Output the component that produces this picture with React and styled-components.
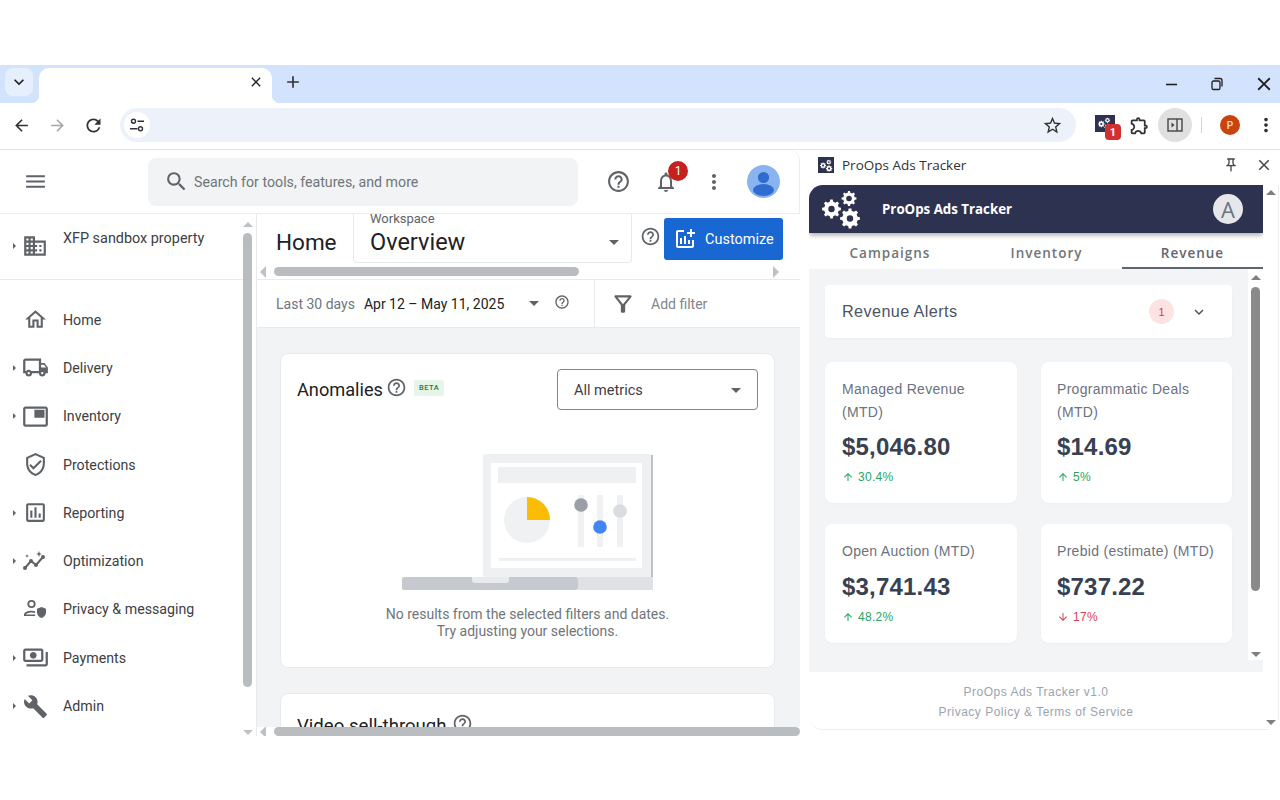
import React from "react";
import styled, { createGlobalStyle } from "styled-components";
import {
  MdAdd,
  MdAddchart,
  MdArrowBack,
  MdArrowDownward,
  MdArrowForward,
  MdArrowUpward,
  MdBuild,
  MdClose,
  MdHelpOutline,
  MdKeyboardArrowDown,
  MdMenu,
  MdMoreVert,
  MdOutlineAssessment,
  MdOutlineDomain,
  MdOutlineExtension,
  MdOutlineFeaturedVideo,
  MdOutlineFilterAlt,
  MdOutlineHome,
  MdOutlineLocalShipping,
  MdOutlineNotifications,
  MdOutlinePayments,
  MdOutlinePushPin,
  MdOutlineVerifiedUser,
  MdRefresh,
  MdRemove,
  MdSearch,
  MdStarBorder,
} from "react-icons/md";

const GlobalStyle = createGlobalStyle`
  html, body {
    margin: 0;
    background: #fff;
    font-family: Roboto, "Liberation Sans", sans-serif;
  }
  * { box-sizing: border-box; }
`;

const MirrorIcon = styled.span`
  display: flex;
  transform: scaleX(-1);
`;

// one gear with a hole, teeth built from the angle of each tooth
const gearPath = (cx, cy, r, hole, teeth = 8) => {
  const points = [];
  const step = (Math.PI * 2) / teeth;
  for (let i = 0; i < teeth; i++) {
    const a = i * step;
    const corners = [
      [a - step * 0.3, r * 0.78],
      [a - step * 0.17, r],
      [a + step * 0.17, r],
      [a + step * 0.3, r * 0.78],
    ];
    corners.forEach(([t, d]) => {
      points.push(`${(cx + Math.cos(t) * d).toFixed(2)} ${(cy + Math.sin(t) * d).toFixed(2)}`);
    });
  }
  const ring = `M${points.join("L")}Z`;
  const inner = `M${cx - hole} ${cy}a${hole} ${hole} 0 1 0 ${hole * 2} 0a${hole} ${hole} 0 1 0 ${-hole * 2} 0Z`;
  return ring + inner;
};

const GearsIcon = ({ size }) => (
  <svg width={size} height={size} viewBox="0 0 40 40">
    <path fillRule="evenodd" fill="#fff" d={gearPath(9.5, 20, 9.5, 3.2)} />
    <path fillRule="evenodd" fill="#fff" d={gearPath(27, 9.5, 7.5, 2.8)} />
    <path fillRule="evenodd" fill="#fff" d={gearPath(28, 29.5, 10, 3.2)} />
  </svg>
);

const OptimizationIcon = () => (
  <svg width="26" height="24" viewBox="0 0 26 24" fill="none">
    <path d="M3 19l6-7 5 4 7-8" stroke="#5f6368" strokeWidth="2" />
    <circle cx="3" cy="19" r="2" fill="#5f6368" />
    <circle cx="9" cy="12" r="2" fill="#5f6368" />
    <circle cx="14" cy="16" r="2" fill="#5f6368" />
    <circle cx="21" cy="8" r="2" fill="#5f6368" />
    <path d="M17 2l.8 2.2L20 5l-2.2.8L17 8l-.8-2.2L14 5l2.2-.8z" fill="#5f6368" />
    <path d="M5 5l.5 1.5L7 7l-1.5.5L5 9l-.5-1.5L3 7l1.5-.5z" fill="#5f6368" />
  </svg>
);

const PrivacyIcon = () => (
  <svg width="26" height="24" viewBox="0 0 26 24" fill="none">
    <circle cx="9.5" cy="7" r="3.2" stroke="#5f6368" strokeWidth="1.8" />
    <path d="M2 19v-1.4c0-2.6 4-3.9 7.5-3.9 1.2 0 2.5.2 3.6.5v1.8c-1.1-.4-2.4-.6-3.6-.6-2.8 0-5.6 1-5.6 2.2h9.2V19z" fill="#5f6368" />
    <path d="M19.5 10l4.5 1.7v3.5c0 2.7-1.9 5-4.5 5.8-2.6-.8-4.5-3.1-4.5-5.8v-3.5z" fill="#5f6368" />
  </svg>
);

const navItems = [
  { label: "Home", icon: <MdOutlineHome size={25} /> },
  { label: "Delivery", icon: <MdOutlineLocalShipping size={27} />, expand: true },
  { label: "Inventory", icon: <MirrorIcon><MdOutlineFeaturedVideo size={27} /></MirrorIcon>, expand: true },
  { label: "Protections", icon: <MdOutlineVerifiedUser size={25} /> },
  { label: "Reporting", icon: <MdOutlineAssessment size={25} />, expand: true },
  { label: "Optimization", icon: <OptimizationIcon />, expand: true },
  { label: "Privacy & messaging", icon: <PrivacyIcon /> },
  { label: "Payments", icon: <MdOutlinePayments size={27} />, expand: true },
  { label: "Admin", icon: <MdBuild size={25} />, expand: true },
];

const stats = [
  { label: "Managed Revenue (MTD)", value: "$5,046.80", change: "30.4%", up: true },
  { label: "Programmatic Deals (MTD)", value: "$14.69", change: "5%", up: true },
  { label: "Open Auction (MTD)", value: "$3,741.43", change: "48.2%", up: true },
  { label: "Prebid (estimate) (MTD)", value: "$737.22", change: "17%", up: false },
];

const RestoreIcon = () => (
  <svg width="14" height="14" viewBox="0 0 14 14" fill="none" stroke="#1f1f1f" strokeWidth="1.3">
    <rect x="2" y="4" width="8" height="8.5" rx="1.6" />
    <path d="M4.5 1.5h5.5a2 2 0 0 1 2 2v6" />
  </svg>
);

const Illustration = () => (
  <IllustrationSvg width="252" height="137" viewBox="0 0 252 137">
    <rect x="0" y="123" width="176" height="13" rx="2" fill="#c6cad0" />
    <rect x="176" y="123" width="75" height="13" rx="1" fill="#dfe1e5" />
    <rect x="81" y="0" width="170" height="123" rx="2" fill="#eff0f2" />
    <rect x="249" y="1" width="2" height="122" fill="#bdc1c6" />
    <rect x="89" y="9" width="151" height="105" fill="#fff" />
    <rect x="96" y="13" width="138" height="16" fill="#eff0f2" />
    <circle cx="125" cy="66" r="23" fill="#f0f1f2" />
    <path d="M125 66V43a23 23 0 0 1 23 23z" fill="#fbbc04" />
    <rect x="176" y="41" width="6" height="52" fill="#f0f1f2" />
    <rect x="195" y="41" width="6" height="52" fill="#f0f1f2" />
    <rect x="215" y="41" width="6" height="52" fill="#f0f1f2" />
    <circle cx="179" cy="51" r="6.8" fill="#9aa0a6" />
    <circle cx="198" cy="73" r="6.8" fill="#4285f4" />
    <circle cx="218" cy="57" r="6.8" fill="#dadce0" />
    <rect x="97" y="104" width="137" height="3" fill="#eff0f2" />
    <path d="M70 123h37v3a3 3 0 0 1-3 3H73a3 3 0 0 1-3-3z" fill="#e8eaed" />
  </IllustrationSvg>
);

const App = () => (
  <>
    <GlobalStyle />
    <Window>
      <TabStrip>
        <TabSearch><MdKeyboardArrowDown size={20} /></TabSearch>
        <Tab><MdClose size={16} /></Tab>
        <NewTab><MdAdd size={20} /></NewTab>
        <WindowControls>
          <MdRemove size={19} />
          <RestoreIcon />
          <MdClose size={22} />
        </WindowControls>
      </TabStrip>

      <Toolbar>
        <NavButton><MdArrowBack size={19} /></NavButton>
        <NavButton $muted><MdArrowForward size={19} /></NavButton>
        <NavButton><MdRefresh size={21} /></NavButton>
        <Omnibox>
          <SiteInfo>
            <svg width="16" height="16" viewBox="0 0 16 16" fill="none" stroke="#303134" strokeWidth="1.4">
              <circle cx="4.5" cy="4.2" r="2" />
              <path d="M8.5 4.2H15M1 11.8h7.5" />
              <circle cx="11.5" cy="11.8" r="2" />
            </svg>
          </SiteInfo>
          <MdStarBorder size={21} color="#303134" />
        </Omnibox>
        <ExtensionButton>
          <GearsIcon size={14} />
          <ExtensionBadge>1</ExtensionBadge>
        </ExtensionButton>
        <PuzzleButton><MdOutlineExtension size={21} /></PuzzleButton>
        <SidePanelButton>
          <svg width="16" height="14" viewBox="0 0 16 14" fill="none">
            <rect x="1" y="1" width="14" height="12" stroke="#444746" strokeWidth="1.4" />
            <path d="M10 1v12" stroke="#444746" strokeWidth="1.4" />
            <path d="M4.5 4.5L7.5 7l-3 2.5z" fill="#444746" />
          </svg>
        </SidePanelButton>
        <ToolbarDivider />
        <ProfileChip>P</ProfileChip>
        <MoreButton><MdMoreVert size={22} /></MoreButton>
      </Toolbar>

      <Workarea>
        <AdManager>
          <AppHeader>
            <MenuButton><MdMenu size={25} /></MenuButton>
            <SearchBox>
              <MdSearch size={25} color="#5f6368" />
              <span>Search for tools, features, and more</span>
            </SearchBox>
            <HeaderActions>
              <HeaderIcon><MdHelpOutline size={25} /></HeaderIcon>
              <HeaderIcon>
                <MdOutlineNotifications size={24} />
                <BellBadge>1</BellBadge>
              </HeaderIcon>
              <HeaderIcon><MdMoreVert size={24} /></HeaderIcon>
              <Avatar>
                <svg width="33" height="33" viewBox="0 0 33 33">
                  <circle cx="16.5" cy="12.5" r="5.6" fill="#2e6ccf" />
                  <ellipse cx="16.5" cy="25" rx="10.5" ry="6" fill="#2e6ccf" />
                </svg>
              </Avatar>
            </HeaderActions>
          </AppHeader>

          <AppBody>
            <Sidebar>
              <SideNav>
                <PropertyRow>
                  <ExpandSlot>
                    <Caret $dir="right" $size={3} $color="#5f6368" />
                  </ExpandSlot>
                  <NavIcon><MdOutlineDomain size={26} /></NavIcon>
                  <PropertyName>XFP sandbox property</PropertyName>
                </PropertyRow>
                <NavList>
                  {navItems.map((item) => (
                    <NavRow key={item.label}>
                      <ExpandSlot>
                        {item.expand && <Caret $dir="right" $size={3} $color="#5f6368" />}
                      </ExpandSlot>
                      <NavIcon>{item.icon}</NavIcon>
                      <NavLabel>{item.label}</NavLabel>
                    </NavRow>
                  ))}
                </NavList>
              </SideNav>
              <VScroll $width={13} $pad="8px 4px 1px 0">
                <Caret $dir="up" $size={5} $color="#bdc1c6" />
                <VThumb $width={9} $length={454} $gap={6} $color="#b9bdc0" />
                <Caret $dir="down" $size={5} $color="#bdc1c6" />
              </VScroll>
            </Sidebar>

            <Main>
              <TitleBlock>
                <TitleRow>
                  <PageTitle>Home</PageTitle>
                  <WorkspaceSelect>
                    <WorkspaceLabel>Workspace</WorkspaceLabel>
                    <WorkspaceValue>
                      Overview
                      <Caret $dir="down" $size={5} $color="#5f6368" />
                    </WorkspaceValue>
                  </WorkspaceSelect>
                  <TitleHelp><MdHelpOutline size={21} /></TitleHelp>
                  <CustomizeButton>
                    <MdAddchart size={24} />
                    Customize
                  </CustomizeButton>
                </TitleRow>
                <HScroll>
                  <Caret $dir="left" $size={6} $color="#bdc1c6" />
                  <HThumb $width={305} />
                  <HEndCaret><Caret $dir="right" $size={6} $color="#bdc1c6" /></HEndCaret>
                </HScroll>
              </TitleBlock>

              <FilterRow>
                <DateGroup>
                  <DateHint>Last 30 days</DateHint>
                  <DateValue>Apr 12 – May 11, 2025</DateValue>
                  <Caret $dir="down" $size={5} $color="#5f6368" />
                  <DateHelp><MdHelpOutline size={16} /></DateHelp>
                </DateGroup>
                <AddFilter>
                  <MdOutlineFilterAlt size={26} color="#5f6368" />
                  <span>Add filter</span>
                </AddFilter>
              </FilterRow>

              <Dashboard>
                <Card>
                  <CardHead>
                    <CardTitle>Anomalies</CardTitle>
                    <TitleHelpIcon><MdHelpOutline size={21} /></TitleHelpIcon>
                    <BetaTag>BETA</BetaTag>
                    <MetricSelect>
                      All metrics
                      <Caret $dir="down" $size={5} $color="#5f6368" />
                    </MetricSelect>
                  </CardHead>
                  <Illustration />
                  <EmptyText>
                    No results from the selected filters and dates.
                    <br />
                    Try adjusting your selections.
                  </EmptyText>
                </Card>
                <Card>
                  <VideoHead>
                    <VideoTitle>Video sell-through</VideoTitle>
                    <TitleHelpIcon><MdHelpOutline size={21} /></TitleHelpIcon>
                  </VideoHead>
                </Card>
              </Dashboard>

              <BottomScroll>
                <Caret $dir="left" $size={6} $color="#bdc1c6" />
                <HThumb $width={526} />
              </BottomScroll>
            </Main>
          </AppBody>
        </AdManager>

        <SidePanel>
          <PanelTitleBar>
            <PanelLogo><GearsIcon size={13} /></PanelLogo>
            <PanelName>ProOps Ads Tracker</PanelName>
            <MdOutlinePushPin size={16} color="#444746" />
            <PanelClose><MdClose size={18} /></PanelClose>
          </PanelTitleBar>

          <ExtensionFrame>
            <ExtensionApp>
              <BrandBar>
                <GearsIcon size={40} />
                <BrandName>ProOps Ads Tracker</BrandName>
                <UserCircle>A</UserCircle>
              </BrandBar>
              <TabRow>
                <SectionTab $width={162}>Campaigns</SectionTab>
                <SectionTab $width={151}>Inventory</SectionTab>
                <SectionTab $width={141} $active>Revenue</SectionTab>
              </TabRow>
              <ScrollArea>
                <ScrollContent>
                  <AlertCard>
                    <AlertTitle>Revenue Alerts</AlertTitle>
                    <AlertCount>1</AlertCount>
                    <MdKeyboardArrowDown size={18} color="#4b5563" />
                  </AlertCard>
                  <StatGrid>
                    {stats.map((stat) => (
                      <StatCard key={stat.label}>
                        <StatLabel>{stat.label}</StatLabel>
                        <StatValue>{stat.value}</StatValue>
                        <StatChange $up={stat.up}>
                          {stat.up ? <MdArrowUpward size={12} /> : <MdArrowDownward size={12} />}
                          {stat.change}
                        </StatChange>
                      </StatCard>
                    ))}
                  </StatGrid>
                </ScrollContent>
                <VScroll $width={15} $pad="6px 0 3px">
                  <Caret $dir="up" $size={5} $color="#7f7f7f" />
                  <VThumb $width={9} $length={304} $gap={7} $color="#8a8a8a" />
                  <Caret $dir="down" $size={5} $color="#7f7f7f" />
                </VScroll>
              </ScrollArea>
              <ScrollFoot />
              <PanelFooter>
                <span>ProOps Ads Tracker v1.0</span>
                <span>Privacy Policy &amp; Terms of Service</span>
              </PanelFooter>
            </ExtensionApp>
            <VScroll $width={15} $pad="5px 0 4px">
              <Caret $dir="up" $size={5} $color="#7f7f7f" />
              <Caret $dir="down" $size={5} $color="#7f7f7f" />
            </VScroll>
          </ExtensionFrame>
        </SidePanel>
      </Workarea>
    </Window>
  </>
);

export default App;

const Window = styled.div`
  width: 1280px;
  height: 800px;
  padding: 65px 0 64px;
  display: flex;
  flex-direction: column;
  overflow: hidden;
  background: #fff;
`;

const TabStrip = styled.div`
  height: 38px;
  flex: none;
  display: flex;
  align-items: flex-end;
  padding-left: 5px;
  background: #d3e3fd;
`;

const TabSearch = styled.div`
  width: 28px;
  height: 28px;
  margin-bottom: 7px;
  border-radius: 8px;
  display: flex;
  align-items: center;
  justify-content: center;
  background: #e6effd;
  color: #1f1f1f;
`;

const Tab = styled.div`
  position: relative;
  width: 233px;
  height: 35px;
  margin-left: 6px;
  padding: 0 8px 7px 0;
  display: flex;
  align-items: center;
  justify-content: flex-end;
  border-radius: 10px 10px 0 0;
  background: #fff;
  color: #1f1f1f;

  &::before,
  &::after {
    content: "";
    position: absolute;
    bottom: 0;
    width: 8px;
    height: 8px;
  }

  &::before {
    left: -8px;
    background: radial-gradient(circle at 0 0, #d3e3fd 8px, #fff 8.5px);
  }

  &::after {
    right: -8px;
    background: radial-gradient(circle at 100% 0, #d3e3fd 8px, #fff 8.5px);
  }
`;

const NewTab = styled.div`
  width: 20px;
  height: 20px;
  margin: 0 0 11px 11px;
  display: flex;
  color: #333;
`;

const WindowControls = styled.div`
  margin-left: auto;
  width: 118px;
  height: 38px;
  padding-right: 5px;
  display: flex;
  align-items: center;
  justify-content: space-between;
  color: #1f1f1f;
`;

const Toolbar = styled.div`
  height: 47px;
  flex: none;
  display: flex;
  align-items: center;
  padding: 0 0 2px 3px;
  border-bottom: 1px solid #e3e5e8;
  background: #fff;
`;

const NavButton = styled.div`
  width: 36px;
  flex: none;
  display: flex;
  justify-content: center;
  color: ${(props) => (props.$muted ? "#a4a6a8" : "#303134")};
`;

const Omnibox = styled.div`
  width: 956px;
  height: 34px;
  flex: none;
  margin-left: 9px;
  padding: 0 13px 0 4px;
  display: flex;
  align-items: center;
  justify-content: space-between;
  border-radius: 17px;
  background: #edf2fa;
`;

const SiteInfo = styled.div`
  width: 26px;
  height: 26px;
  display: flex;
  align-items: center;
  justify-content: center;
  border-radius: 50%;
  background: #fff;
`;

const ExtensionButton = styled.div`
  position: relative;
  width: 20px;
  height: 17px;
  flex: none;
  margin: -3px 0 0 19px;
  display: flex;
  align-items: center;
  justify-content: center;
  background: #2e3251;
`;

const ExtensionBadge = styled.span`
  position: absolute;
  left: 10px;
  top: 9px;
  width: 16px;
  height: 16px;
  display: flex;
  align-items: center;
  justify-content: center;
  border-radius: 4px;
  background: #d32f2f;
  color: #fff;
  font-size: 11px;
  font-weight: 700;
`;

const PuzzleButton = styled.div`
  width: 21px;
  flex: none;
  margin-left: 14px;
  display: flex;
  color: #303134;
`;

const SidePanelButton = styled.div`
  width: 34px;
  height: 34px;
  flex: none;
  margin-left: 8px;
  display: flex;
  align-items: center;
  justify-content: center;
  border-radius: 50%;
  background: #e0e0e0;
`;

const ToolbarDivider = styled.div`
  width: 1px;
  height: 16px;
  flex: none;
  margin-left: 9px;
  background: #c9d8f0;
`;

const ProfileChip = styled.div`
  width: 20px;
  height: 20px;
  flex: none;
  margin-left: 18px;
  display: flex;
  align-items: center;
  justify-content: center;
  border-radius: 50%;
  background: #c8430f;
  color: #f8d9c8;
  font-size: 10px;
  font-weight: 500;
`;

const MoreButton = styled.div`
  margin-left: 15px;
  flex: none;
  display: flex;
  color: #303134;
`;

const Workarea = styled.div`
  flex: 1;
  min-height: 0;
  display: flex;
`;

const AdManager = styled.div`
  width: 800px;
  flex: none;
  display: flex;
  flex-direction: column;
  overflow: hidden;
  background: #fff;
`;

const AppHeader = styled.header`
  height: 64px;
  flex: none;
  display: flex;
  align-items: center;
  border-bottom: 1px solid #eceef0;
  border-right: 1px solid #eceef0;
  border-top-right-radius: 10px;
`;

const MenuButton = styled.div`
  width: 148px;
  padding-left: 23px;
  display: flex;
  color: #5f6368;
`;

const SearchBox = styled.div`
  width: 430px;
  height: 48px;
  padding-left: 16px;
  display: flex;
  align-items: center;
  gap: 5px;
  border-radius: 8px;
  background: #f1f3f4;
  color: #70757a;
  font-size: 14.2px;
`;

const HeaderActions = styled.div`
  margin-left: 16px;
  display: flex;
  align-items: center;
`;

const HeaderIcon = styled.div`
  position: relative;
  width: 48px;
  display: flex;
  justify-content: center;
  color: #5f6368;
`;

const BellBadge = styled.span`
  position: absolute;
  left: 26px;
  top: -9px;
  width: 20px;
  height: 20px;
  display: flex;
  align-items: center;
  justify-content: center;
  border-radius: 50%;
  background: #c5221f;
  color: #fff;
  font-size: 12px;
`;

const Avatar = styled.div`
  width: 33px;
  height: 33px;
  margin-left: 9px;
  display: flex;
  overflow: hidden;
  border-radius: 50%;
  background: #8ab4f0;
`;

const AppBody = styled.div`
  flex: 1;
  min-height: 0;
  display: flex;
`;

const Sidebar = styled.aside`
  width: 257px;
  flex: none;
  display: flex;
  border-right: 1px solid #e8eaed;
`;

const SideNav = styled.nav`
  flex: 1;
  min-width: 0;
`;

const PropertyRow = styled.div`
  height: 66px;
  padding-top: 19px;
  display: flex;
  align-items: flex-start;
  border-bottom: 1px solid #e8eaed;
`;

const PropertyName = styled.div`
  margin: -3px 0 0 13px;
  color: #3c4043;
  font-size: 14.4px;
  line-height: 18px;
`;

const NavList = styled.div`
  padding-top: 15.5px;
`;

const NavRow = styled.div`
  height: 48.3px;
  display: flex;
  align-items: center;
`;

const ExpandSlot = styled.div`
  width: 20px;
  min-height: 26px;
  padding-left: 13px;
  display: flex;
  align-items: center;
`;

const NavIcon = styled.div`
  width: 30px;
  display: flex;
  justify-content: center;
  color: #5f6368;
`;

const NavLabel = styled.div`
  margin-left: 13px;
  color: #3c4043;
  font-size: 14.2px;
`;

const VScroll = styled.div`
  width: ${(props) => props.$width}px;
  flex: none;
  padding: ${(props) => props.$pad};
  display: flex;
  flex-direction: column;
  align-items: center;
  justify-content: space-between;
  background: #fff;
`;

const VThumb = styled.div`
  width: ${(props) => props.$width}px;
  height: ${(props) => props.$length}px;
  margin: ${(props) => props.$gap}px 0 auto;
  border-radius: 5px;
  background: ${(props) => props.$color};
`;

const Caret = styled.span`
  display: block;
  flex: none;
  width: 0;
  height: 0;
  border-style: solid;
  border-color: transparent;
  border-width: ${(props) => props.$size}px;
  ${(props) =>
    props.$dir === "down" &&
    `border-top: ${props.$size}px solid ${props.$color}; border-bottom-width: 0;`}
  ${(props) =>
    props.$dir === "up" &&
    `border-bottom: ${props.$size}px solid ${props.$color}; border-top-width: 0;`}
  ${(props) =>
    props.$dir === "right" &&
    `border-left: ${props.$size}px solid ${props.$color}; border-right-width: 0;`}
  ${(props) =>
    props.$dir === "left" &&
    `border-right: ${props.$size}px solid ${props.$color}; border-left-width: 0;`}
`;

const Main = styled.main`
  flex: 1;
  min-width: 0;
  display: flex;
  flex-direction: column;
`;

const TitleBlock = styled.div`
  height: 66px;
  flex: none;
  display: flex;
  flex-direction: column;
  border-bottom: 1px solid #e8eaed;
`;

const TitleRow = styled.div`
  height: 50px;
  flex: none;
  display: flex;
  align-items: flex-start;
  padding-left: 19px;
`;

const PageTitle = styled.div`
  width: 77px;
  padding-top: 14px;
  color: #202124;
  font-size: 22.5px;
  line-height: 28px;
`;

const WorkspaceSelect = styled.div`
  width: 279px;
  height: 49px;
  padding: 0 12px 0 16px;
  border: 1px solid #e8eaed;
  border-top: none;
  border-radius: 0 0 4px 4px;
  overflow: hidden;
`;

const WorkspaceLabel = styled.div`
  height: 9px;
  color: #5f6368;
  font-size: 13px;
  line-height: 9px;
`;

const WorkspaceValue = styled.div`
  height: 38px;
  display: flex;
  align-items: center;
  justify-content: space-between;
  color: #202124;
  font-size: 23.5px;
`;

const TitleHelp = styled.div`
  width: 32px;
  padding: 12px 0 0 8px;
  display: flex;
  color: #5f6368;
`;

const CustomizeButton = styled.div`
  width: 119px;
  height: 42px;
  margin-top: 4px;
  padding-left: 9px;
  display: flex;
  align-items: center;
  gap: 8px;
  border-radius: 3px;
  background: #1967d2;
  color: #fff;
  font-size: 14.5px;
  font-weight: 400;
`;

const HScroll = styled.div`
  height: 15px;
  padding-left: 3px;
  display: flex;
  align-items: center;
`;

const HThumb = styled.div`
  width: ${(props) => props.$width}px;
  height: 9px;
  margin-left: 8px;
  border-radius: 5px;
  background: #b9bdc0;
`;

const HEndCaret = styled.div`
  margin-left: auto;
  padding-right: 21px;
`;

const FilterRow = styled.div`
  height: 48px;
  flex: none;
  display: flex;
  border-bottom: 1px solid #e8eaed;
`;

const DateGroup = styled.div`
  width: 338px;
  padding-left: 19px;
  display: flex;
  align-items: center;
  border-right: 1px solid #e8eaed;
`;

const DateHint = styled.span`
  color: #70757a;
  font-size: 14px;
`;

const DateValue = styled.span`
  width: 165px;
  margin-left: 9px;
  color: #202124;
  font-size: 14px;
`;

const DateHelp = styled.span`
  display: flex;
  margin: -4px 0 0 15px;
  color: #5f6368;
`;

const AddFilter = styled.div`
  padding-left: 15px;
  display: flex;
  align-items: center;
  gap: 15px;
  color: #80868b;
  font-size: 14px;
`;

const Dashboard = styled.div`
  flex: 1;
  min-height: 0;
  padding: 25px 25px 0 23px;
  overflow: hidden;
  background: #f1f3f4;
`;

const Card = styled.section`
  margin-bottom: 25px;
  padding: 15px 16px 27px;
  display: flex;
  flex-direction: column;
  border: 1px solid #e8eaed;
  border-radius: 8px;
  background: #fff;
`;

const CardHead = styled.div`
  display: flex;
  align-items: center;
`;

const VideoHead = styled(CardHead)`
  padding-top: 5px;
`;

const CardTitle = styled.h2`
  margin: 0;
  color: #202124;
  font-size: 18.2px;
  font-weight: 400;
  line-height: 24px;
`;

const VideoTitle = styled(CardTitle)`
  font-size: 18.6px;
  margin-right: 2px;
`;

const TitleHelpIcon = styled.span`
  display: flex;
  margin: -5px 0 0 3px;
  color: #5f6368;
`;

const BetaTag = styled.span`
  margin: -4px 0 0 7px;
  padding: 0 5px;
  height: 16px;
  display: flex;
  align-items: center;
  border-radius: 2px;
  background: #e6f4ea;
  color: #188038;
  font-size: 7.5px;
  font-weight: 500;
  letter-spacing: 0.5px;
`;

const MetricSelect = styled.div`
  width: 201px;
  height: 41px;
  margin-left: auto;
  padding: 1px 16px 0;
  display: flex;
  align-items: center;
  justify-content: space-between;
  border: 1px solid #80868b;
  border-radius: 4px;
  color: #3c4043;
  font-size: 14.5px;
`;

const IllustrationSvg = styled.svg`
  display: block;
  margin: 44px auto 0;
`;

const EmptyText = styled.p`
  margin: 15px 0 0;
  text-align: center;
  color: #70757a;
  font-size: 14px;
  line-height: 17px;
`;

const BottomScroll = styled.div`
  height: 9px;
  flex: none;
  padding-left: 3px;
  display: flex;
  align-items: center;
  overflow: hidden;
  background: #fff;
`;

const SidePanel = styled.div`
  flex: 1;
  min-width: 0;
  display: flex;
  flex-direction: column;
  background: #fff;
`;

const PanelTitleBar = styled.div`
  height: 35px;
  flex: none;
  padding: 0 7px 5px 18px;
  display: flex;
  align-items: center;
`;

const PanelLogo = styled.div`
  width: 16px;
  height: 16px;
  display: flex;
  align-items: center;
  justify-content: center;
  background: #2e3251;
`;

const PanelName = styled.div`
  margin-left: 8px;
  flex: 1;
  color: #303134;
  font-family: "Open Sans", sans-serif;
  font-size: 13.5px;
`;

const PanelClose = styled.div`
  margin-left: 16px;
  display: flex;
  color: #444746;
`;

const ExtensionFrame = styled.div`
  width: 470px;
  height: 545px;
  flex: none;
  margin-left: 9px;
  display: flex;
  border: 1px solid #eceef0;
  border-top: none;
  border-left: none;
  border-radius: 0 0 14px 14px;
`;

const ExtensionApp = styled.div`
  width: 454px;
  flex: none;
  display: flex;
  flex-direction: column;
  overflow: hidden;
  border-radius: 14px 0 14px 14px;
  background: #f3f4f6;
`;

const BrandBar = styled.div`
  position: relative;
  height: 48px;
  flex: none;
  padding: 0 20px 0 13px;
  display: flex;
  align-items: center;
  background: #2e3251;
  box-shadow: 0 2px 5px rgba(0, 0, 0, 0.35);
`;

const BrandName = styled.div`
  margin-left: 20px;
  flex: 1;
  color: #fff;
  font-family: "Open Sans", sans-serif;
  font-size: 13.3px;
  font-weight: 700;
`;

const UserCircle = styled.div`
  width: 30px;
  height: 30px;
  display: flex;
  align-items: center;
  justify-content: center;
  border-radius: 50%;
  background: #e5e7eb;
  color: #6b7280;
  font-family: "Open Sans", sans-serif;
  font-size: 22px;
`;

const TabRow = styled.div`
  height: 36px;
  flex: none;
  display: flex;
  background: #fff;
`;

const SectionTab = styled.div`
  width: ${(props) => props.$width}px;
  padding-top: 5px;
  display: flex;
  align-items: center;
  justify-content: center;
  border-bottom: 2px solid ${(props) => (props.$active ? "#5f6670" : "transparent")};
  color: ${(props) => (props.$active ? "#5f6670" : "#70757a")};
  font-family: "Open Sans", sans-serif;
  font-size: 13.5px;
  font-weight: 600;
  letter-spacing: 1px;
`;

const ScrollArea = styled.div`
  height: 391px;
  flex: none;
  display: flex;
`;

const ScrollContent = styled.div`
  flex: 1;
  min-width: 0;
  padding: 16px 16px 0;
`;

const ScrollFoot = styled.div`
  height: 12px;
  flex: none;
`;

const AlertCard = styled.div`
  height: 53px;
  padding: 0 24px 0 17px;
  display: flex;
  align-items: center;
  border-radius: 4px;
  background: #fff;
  box-shadow: 0 1px 2px rgba(0, 0, 0, 0.03);
`;

const AlertTitle = styled.div`
  flex: 1;
  color: #4b5563;
  font-family: "Liberation Sans", sans-serif;
  font-size: 16.2px;
  letter-spacing: 0.4px;
`;

const AlertCount = styled.div`
  width: 25px;
  height: 25px;
  margin-right: 16px;
  display: flex;
  align-items: center;
  justify-content: center;
  border-radius: 50%;
  background: #fde2e2;
  color: #dc3545;
  font-family: "Liberation Sans", sans-serif;
  font-size: 11px;
`;

const StatGrid = styled.div`
  margin-top: 24px;
  display: grid;
  grid-template-columns: 192px 191px;
  grid-template-rows: 141px 119px;
  column-gap: 24px;
  row-gap: 21px;
`;

const StatCard = styled.div`
  padding: 16px 0 0 16px;
  border-radius: 8px;
  background: #fff;
  font-family: "Liberation Sans", sans-serif;
  box-shadow: 0 1px 2px rgba(0, 0, 0, 0.03);

  &:nth-child(odd) {
    padding-left: 17px;
  }

  &:nth-child(n + 3) > div:nth-child(2) {
    margin-top: 10px;
  }
`;

const StatLabel = styled.div`
  width: 162px;
  color: #6b7280;
  font-size: 14px;
  line-height: 23px;
  letter-spacing: 0.3px;
`;

const StatValue = styled.div`
  margin-top: 9px;
  color: #374151;
  font-size: 24px;
  font-weight: 700;
  line-height: 28px;
  letter-spacing: 0.2px;
`;

const StatChange = styled.div`
  margin-top: 8px;
  display: flex;
  align-items: center;
  gap: 4px;
  color: ${(props) => (props.$up ? "#27a560" : "#d9414f")};
  font-size: 12px;
  line-height: 16px;
  letter-spacing: 0.3px;
`;

const PanelFooter = styled.footer`
  flex: 1;
  padding-top: 13px;
  display: flex;
  flex-direction: column;
  align-items: center;
  gap: 6px;
  background: #fff;
  color: #9ca3af;
  font-family: "Liberation Sans", sans-serif;
  font-size: 12px;
  line-height: 14px;
  letter-spacing: 0.5px;
`;
